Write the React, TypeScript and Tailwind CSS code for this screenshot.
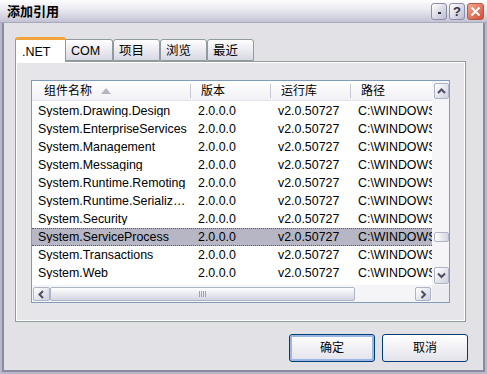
import React from "react";

const rows = [
  "System.Drawing.Design",
  "System.EnterpriseServices",
  "System.Management",
  "System.Messaging",
  "System.Runtime.Remoting",
  "System.Runtime.Serialization.Formatters.Soap",
  "System.Security",
  "System.ServiceProcess",
  "System.Transactions",
  "System.Web",
  "System.Web.Mobile",
];

function Chevron({ dir }: { dir: "up" | "down" | "left" | "right" }) {
  const pts = {
    up: "2,7 5.5,3.5 9,7",
    down: "2,3.5 5.5,7 9,3.5",
    left: "7,2 3.5,5.5 7,9",
    right: "3.5,2 7,5.5 3.5,9",
  }[dir];
  return (
    <svg width="11" height="11" viewBox="0 0 11 11">
      <polyline points={pts} fill="none" stroke="#4d4d63" strokeWidth="2" />
    </svg>
  );
}

function SbButton({ dir, className = "" }: { dir: "up" | "down" | "left" | "right"; className?: string }) {
  return (
    <div
      className={`flex items-center justify-center rounded-[2px] border border-[#aeb4c8] bg-gradient-to-br from-[#ffffff] to-[#cfd0dd] ${className}`}
    >
      <Chevron dir={dir} />
    </div>
  );
}

export default function App() {
  return (
    <div className="w-[487px] h-[374px] flex flex-col bg-[#e2e1e6] font-['Liberation_Sans','Noto_Sans_CJK_SC',sans-serif] text-black">
      {/* title bar */}
      <div className="h-[23px] flex items-center justify-between pl-[7px] pr-[3px] bg-gradient-to-b from-[#fefefe] via-[#e6e6ee] to-[#c3c2d4] border-b border-[#a9a9bc]">
        <span className="text-[13px] font-bold leading-none [text-shadow:1px_1px_0_#d8d8e4]">添加引用</span>
        <div className="flex items-center gap-[2px]">
          <div className="w-[16px] h-[17px] rounded-[3px] border border-[#8d8da6] bg-gradient-to-br from-white to-[#bcbccf] flex items-end justify-center pb-[5px]">
            <div className="w-[3px] h-[2px] bg-[#30304a]" />
          </div>
          <div className="w-[16px] h-[17px] rounded-[3px] border border-[#8d8da6] bg-gradient-to-br from-white to-[#bcbccf] flex items-center justify-center text-[13px] font-bold leading-none text-[#30304a]">
            ?
          </div>
          <div className="w-[17px] h-[17px] rounded-[3px] border border-[#b05a48] bg-gradient-to-br from-[#f4a692] to-[#d24a32] flex items-center justify-center">
            <svg width="11" height="11" viewBox="0 0 11 11">
              <path d="M1.5 1.5 L9.5 9.5 M9.5 1.5 L1.5 9.5" stroke="#ffffff" strokeWidth="2" />
            </svg>
          </div>
        </div>
      </div>

      {/* body */}
      <div className="flex-1 border-x-[2px] border-b-[2px] border-[#b8b8c8]">
        <div className="h-full border-x-[2px] border-b-[2px] border-[#8a8aa2] pt-[14px] pl-[11px] pr-[16px] flex flex-col">
          {/* tabs */}
          <div className="flex items-end h-[24px] text-[12.5px] leading-none">
            <div className="relative z-10 -mb-px w-[51px] h-[25px] bg-white border-x border-[#919b9c] border-t-[3px] border-t-[#f2a33a] rounded-t-[3px] pl-[6px] pt-[6px]">
              .NET
            </div>
            <div className="w-[47px] h-[22px] border border-[#919b9c] border-l-0 rounded-tr-[3px] bg-gradient-to-b from-white to-[#d8d8e4] pl-[5px] pt-[5px]">COM</div>
            <div className="w-[47px] h-[22px] border border-[#919b9c] rounded-t-[3px] bg-gradient-to-b from-white to-[#d8d8e4] pl-[5px] pt-[5px]">项目</div>
            <div className="w-[47px] h-[22px] border border-[#919b9c] rounded-t-[3px] bg-gradient-to-b from-white to-[#d8d8e4] pl-[5px] pt-[5px]">浏览</div>
            <div className="w-[47px] h-[22px] border border-[#919b9c] rounded-t-[3px] bg-gradient-to-b from-white to-[#d8d8e4] pl-[5px] pt-[5px]">最近</div>
          </div>

          {/* tab panel */}
          <div className="w-[451px] h-[261px] border border-[#919b9c] bg-[#e6e6ea] shadow-[inset_1px_1px_0_#fff,inset_-1px_-1px_0_#fff] pt-[18px] pl-[15px]">
            {/* list view */}
            <div className="w-[419px] h-[223px] border border-[#7f9db9] bg-white grid grid-cols-[400px_17px] grid-rows-[204px_17px]">
              <div className="overflow-hidden text-[12.4px] leading-none">
                {/* header */}
                <div className="h-[20px] flex items-center bg-gradient-to-b from-white to-[#f1f1f5] border-b border-[#e6e6ee] text-[12px] whitespace-nowrap">
                  <div className="w-[159px] shrink-0 flex items-center pl-[12px] h-full">
                    <span>组件名称</span>
                    <svg className="ml-[9px]" width="10" height="6" viewBox="0 0 10 6">
                      <path d="M0 6 L5 0 L10 6 Z" fill="#b5b5bf" />
                    </svg>
                    <div className="ml-auto w-px h-[14px] bg-[#c8c8d2]" />
                  </div>
                  <div className="w-[80px] shrink-0 flex items-center pl-[10px] h-full">
                    <span>版本</span>
                    <div className="ml-auto w-px h-[14px] bg-[#c8c8d2]" />
                  </div>
                  <div className="w-[80px] shrink-0 flex items-center pl-[10px] h-full">
                    <span>运行库</span>
                    <div className="ml-auto w-px h-[14px] bg-[#c8c8d2]" />
                  </div>
                  <div className="w-[120px] shrink-0 flex items-center pl-[10px] h-full">
                    <span>路径</span>
                  </div>
                </div>
                {/* rows */}
                {rows.map((name, i) => {
                  const sel = name === "System.ServiceProcess";
                  return (
                    <div
                      key={name}
                      className={`h-[18px] flex items-center whitespace-nowrap ${
                        sel ? "bg-[#b6b6c4] border-y border-dotted border-[#55556a]" : ""
                      } ${i === 0 ? "mt-px" : ""}`}
                    >
                      <div className="w-[159px] shrink-0 pl-[6px] overflow-hidden text-ellipsis">{name}</div>
                      <div className="w-[80px] shrink-0 pl-[7px]">2.0.0.0</div>
                      <div className="w-[80px] shrink-0 pl-[7px]">v2.0.50727</div>
                      <div className="w-[81px] shrink-0 pl-[7px] overflow-hidden">C:\WINDOWS\Microsoft.NET</div>
                    </div>
                  );
                })}
              </div>

              {/* vertical scrollbar */}
              <div className="bg-[#f5f5f8] flex flex-col pl-[2px] pt-[2px] pb-px">
                <SbButton dir="up" className="w-[15px] h-[16px]" />
                <div className="flex-1 flex flex-col">
                  <div className="h-[133px]" />
                  <div className="w-[15px] h-[10px] rounded-[2px] border border-[#aeb4c8] bg-gradient-to-r from-white to-[#d4d5e2]" />
                </div>
                <SbButton dir="down" className="w-[15px] h-[17px]" />
              </div>

              {/* horizontal scrollbar */}
              <div className="bg-[#f5f5f8] flex items-center pl-px pt-px">
                <SbButton dir="left" className="w-[17px] h-[14px]" />
                <div className="w-[305px] h-[14px] rounded-[2px] border border-[#aeb4c8] bg-gradient-to-b from-white to-[#d4d5e2] flex items-center justify-center">
                  <div className="flex gap-px">
                    <div className="w-px h-[6px] bg-[#a0a0b4]" />
                    <div className="w-px h-[6px] bg-[#a0a0b4]" />
                    <div className="w-px h-[6px] bg-[#a0a0b4]" />
                    <div className="w-px h-[6px] bg-[#a0a0b4]" />
                  </div>
                </div>
                <div className="flex-1" />
                <SbButton dir="right" className="w-[16px] h-[14px] mr-px" />
              </div>
              <div className="bg-[#ececf0]" />
            </div>
          </div>

          {/* buttons */}
          <div className="mt-[12px] flex justify-end gap-[7px] -mr-px text-[12px]">
            <button className="w-[86px] h-[28px] rounded-[3px] border border-[#003c74] bg-gradient-to-b from-white to-[#e2e2ea] shadow-[inset_0_0_0_2px_#9cb6e8]">
              确定
            </button>
            <button className="w-[86px] h-[28px] rounded-[3px] border border-[#003c74] bg-gradient-to-b from-white to-[#e2e2ea]">
              取消
            </button>
          </div>
        </div>
      </div>
    </div>
  );
}
